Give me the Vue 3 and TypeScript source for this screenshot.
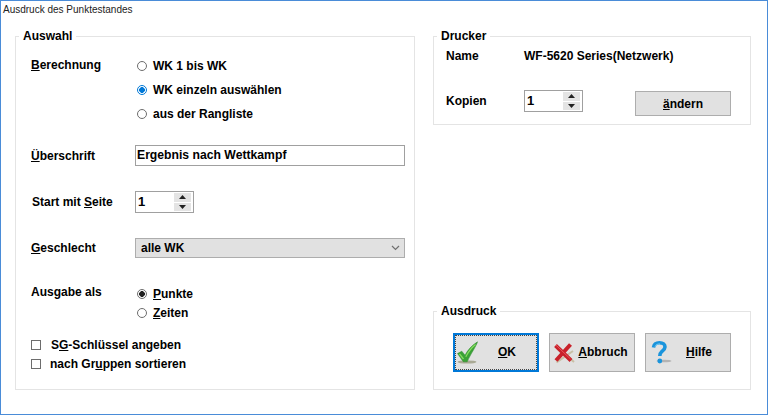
<script setup lang="ts">
const title = 'Ausdruck des Punktestandes'
</script>

<template>
  <div class="window">
    <div class="title">{{ title }}</div>
    <div class="main">
      <section class="group auswahl">
        <div class="legend">Auswahl</div>
        <div class="row calc">
          <div class="label"><u>B</u>erechnung</div>
          <div class="radios">
            <div class="radio-row"><span class="radio"></span>WK 1 bis WK</div>
            <div class="radio-row"><span class="radio on-blue"></span>WK einzeln auswählen</div>
            <div class="radio-row"><span class="radio"></span>aus der Rangliste</div>
          </div>
        </div>
        <div class="row heading">
          <div class="label"><u>Ü</u>berschrift</div>
          <div class="input">Ergebnis nach Wettkampf</div>
        </div>
        <div class="row start">
          <div class="label shifted">Start mit <u>S</u>eite</div>
          <div class="spin">
            <span class="spin-value">1</span>
            <span class="spin-btns">
              <span class="spin-btn"><svg width="7" height="4" viewBox="0 0 7 4"><path d="M3.5 0L7 4H0z" fill="#222" /></svg></span>
              <span class="spin-btn"><svg width="7" height="4" viewBox="0 0 7 4"><path d="M0 0H7L3.5 4z" fill="#222" /></svg></span>
            </span>
          </div>
        </div>
        <div class="row gender">
          <div class="label"><u>G</u>eschlecht</div>
          <div class="select">
            <span>alle WK</span>
            <svg width="9" height="6" viewBox="0 0 9 6"><path d="M1 1l3.5 3.5L8 1" fill="none" stroke="#707070" stroke-width="1.2" /></svg>
          </div>
        </div>
        <div class="row output">
          <div class="label">Ausgabe als</div>
          <div class="radios tight">
            <div class="radio-row"><span class="radio on-dark"></span><span><u>P</u>unkte</span></div>
            <div class="radio-row"><span class="radio"></span><span><u>Z</u>eiten</span></div>
          </div>
        </div>
        <div class="checks">
          <div class="check-row"><span class="check"></span><span class="check-text first">S<u>G</u>-Schlüssel angeben</span></div>
          <div class="check-row"><span class="check"></span><span class="check-text">nach Gr<u>u</u>ppen sortieren</span></div>
        </div>
      </section>

      <div class="side">
        <section class="group drucker">
          <div class="legend">Drucker</div>
          <div class="printer-name">
            <span class="p-label">Name</span>
            <span>WF-5620 Series(Netzwerk)</span>
          </div>
          <div class="printer-copies">
            <span class="p-label copies-label">Kopien</span>
            <div class="spin copies-spin">
              <span class="spin-value">1</span>
              <span class="spin-btns">
                <span class="spin-btn"><svg width="7" height="4" viewBox="0 0 7 4"><path d="M3.5 0L7 4H0z" fill="#222" /></svg></span>
                <span class="spin-btn"><svg width="7" height="4" viewBox="0 0 7 4"><path d="M0 0H7L3.5 4z" fill="#222" /></svg></span>
              </span>
            </div>
            <button class="btn change" type="button"><u>ä</u>ndern</button>
          </div>
        </section>

        <section class="group ausdruck">
          <div class="legend">Ausdruck</div>
          <div class="actions">
            <button class="btn action default" type="button">
              <svg class="icon icon-check" width="22" height="24" viewBox="0 0 22 24">
                <ellipse cx="10" cy="21" rx="9.5" ry="1.6" fill="#a9a994" />
                <path d="M0.5 12.5L4.8 10.2L8 14.2C10.5 9.5 14.5 4.5 20.5 0.8C19.5 5 13.5 13 10.2 20.8H6.3z" fill="#3aa236" stroke="#2a8a2a" stroke-width=".5" />
                <path d="M2.5 12.8L6.5 18M8.8 15.8C11.5 10.5 14.8 6.5 18.5 3.5" fill="none" stroke="#86dc5e" stroke-width="1.3" />
              </svg>
              <span class="action-text"><u>O</u>K</span>
            </button>
            <button class="btn action" type="button">
              <svg class="icon icon-x" width="22" height="22" viewBox="0 0 22 22">
                <path d="M3.5 20.5L20 9M6 7L21 20" fill="none" stroke="#c9bfa5" stroke-width="2" />
                <path d="M2.5 3.5L18 18.5M17.5 2.5L3 18.5" fill="none" stroke="#c9212a" stroke-width="4" />
                <path d="M3 3.2L17.5 17" fill="none" stroke="#e8555a" stroke-width="1" />
              </svg>
              <span class="action-text"><u>A</u>bbruch</span>
            </button>
            <button class="btn action" type="button">
              <svg class="icon icon-help" width="22" height="24" viewBox="0 0 22 24">
                <ellipse cx="13" cy="20" rx="7.5" ry="1.3" fill="#b3b3b3" />
                <path d="M2.5 6.5C3 3.2 5.5 1.8 8.5 1.8C12 1.8 14 3.6 14 6C14 8.4 12 9.6 10.5 10.8C9.3 11.8 8.8 12.8 8.8 15" fill="none" stroke="#1a94dc" stroke-width="3.6" />
                <circle cx="8.8" cy="20" r="2.4" fill="#1a94dc" />
                <path d="M4 5.5C5 3.5 7 2.8 9 3" fill="none" stroke="#7fd0f5" stroke-width="1" />
              </svg>
              <span class="action-text"><u>H</u>ilfe</span>
            </button>
          </div>
        </section>
      </div>
    </div>
  </div>
</template>

<style>
html, body { margin: 0; padding: 0; background: #fff; }
</style>

<style scoped>
.window {
  box-sizing: border-box;
  width: 768px;
  height: 415px;
  border: 1px solid #4a8cd8;
  background: #fff;
  color: #000;
  font: 700 12px "Liberation Sans", Arial, sans-serif;
  overflow: hidden;
}
.title {
  height: 35px;
  padding: 2px 0 0 2px;
  box-sizing: border-box;
  font-weight: 400;
  font-size: 10px;
  line-height: 13px;
  color: #222;
}
.main {
  display: flex;
  gap: 18px;
  padding-left: 14px;
  height: 354px;
}
.group {
  position: relative;
  box-sizing: border-box;
  border: 1px solid #e4e4e4;
}
.legend {
  position: absolute;
  top: -9px;
  left: 3px;
  padding: 0 4px;
  background: #fff;
  line-height: 16px;
}
.auswahl {
  width: 400px;
  height: 354px;
  padding: 17px 9px 0 15px;
}
.row { display: flex; }
.label { width: 104px; flex: none; line-height: 24px; }
.calc .label { line-height: 22px; }
.shifted { padding-left: 1px; width: 103px; }
.radios { padding-left: 2px; }
.radio-row { display: flex; align-items: center; height: 24px; }
.radio {
  box-sizing: border-box;
  width: 10px;
  height: 10px;
  margin-right: 6px;
  border: 1px solid #6d6d6d;
  border-radius: 50%;
  background: #fff;
  flex: none;
}
.on-blue { border-color: #0078d7; background: radial-gradient(circle, #0078d7 0 2.6px, #fff 3.1px); }
.on-dark { background: radial-gradient(circle, #222 0 2.6px, #fff 3.1px); }
.heading { margin-top: 19px; height: 21px; align-items: center; }
.input {
  box-sizing: border-box;
  width: 270px;
  height: 21px;
  border: 1px solid #a0a0a0;
  padding-left: 1px;
  line-height: 19px;
  font-size: 12.2px;
}
.start { margin-top: 25px; height: 22px; align-items: center; }
.spin {
  box-sizing: border-box;
  display: flex;
  justify-content: space-between;
  width: 59px;
  height: 22px;
  border: 1px solid #a0a0a0;
  padding: 1px 2px 1px 2px;
  background: #fff;
}
.spin-value { line-height: 17px; font-size: 13px; }
.spin-btns { display: flex; flex-direction: column; gap: 1px; width: 17px; }
.spin-btn {
  flex: 1;
  display: flex;
  align-items: center;
  justify-content: center;
  background: #e4e4e4;
}
.gender { margin-top: 25px; height: 20px; align-items: center; }
.select {
  box-sizing: border-box;
  display: flex;
  align-items: center;
  justify-content: space-between;
  width: 270px;
  height: 20px;
  padding: 0 4px 0 5px;
  background: #e1e1e1;
  border: 1px solid #adadad;
}
.output { margin-top: 23px; }
.tight .radio-row { height: 19px; }
.output .label { line-height: 22px; }
.tight { padding-top: 3px; }
.checks { margin-top: 13px; }
.check-row { display: flex; align-items: center; height: 19.5px; }
.check {
  box-sizing: border-box;
  width: 10px;
  height: 10px;
  border: 1px solid #6d6d6d;
  background: #fff;
  flex: none;
}
.check-text { margin-left: 9px; }
.check-text.first { margin-left: 10px; }
.side {
  width: 318px;
  height: 354px;
  display: flex;
  flex-direction: column;
  justify-content: space-between;
}
.drucker { height: 89px; padding: 11px 0 0 12px; }
.printer-name { display: flex; line-height: 16px; }
.p-label { width: 78px; flex: none; }
.printer-copies { display: flex; align-items: flex-start; margin-top: 23px; }
.copies-label { margin-top: 6px; line-height: 16px; }
.copies-spin { margin-top: 3px; }
.btn {
  box-sizing: border-box;
  background: #e1e1e1;
  border: 1px solid #adadad;
  color: #000;
  font: inherit;
  padding: 0;
}
.change { width: 96px; height: 25px; margin: 4px 0 0 52px; }
.ausdruck { height: 79px; padding: 21px 0 0 19px; }
.actions { display: flex; gap: 10px; }
.action {
  width: 86px;
  height: 39px;
  display: flex;
  align-items: center;
  padding: 0 6px 2px 6px;
}
.default {
  border: 2px solid #0078d7;
  outline: 1px dotted #444;
  outline-offset: -3px;
}
.icon { flex: none; }
.icon-check { margin: 2px 4px 0 -4px; }
.icon-x { margin: 2px 3px 0 -3px; }
.icon-help { margin: 2px 1px 0 -1px; }
.action-text { flex: 1; text-align: center; }
u { text-decoration-thickness: 1px; text-underline-offset: 1px; }
</style>
